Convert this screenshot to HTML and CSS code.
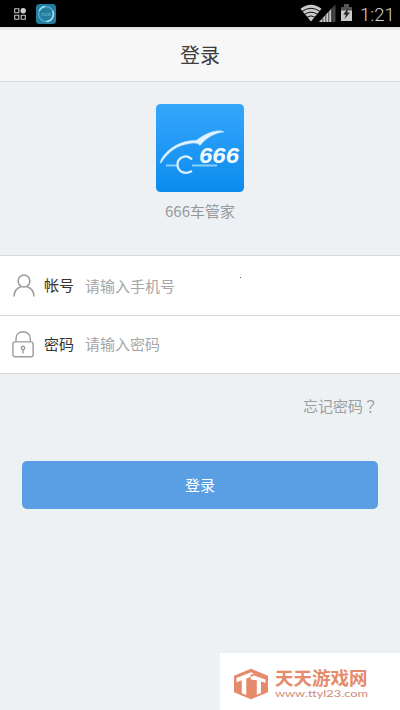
FILE: index.html
```html
<!DOCTYPE html>
<html lang="zh-CN">
<head>
<meta charset="utf-8">
<title>登录</title>
<link rel="stylesheet" href="styles.css">
</head>
<body>
<div class="screen">
  <div class="status">
    <svg class="status-apps" viewBox="0 0 12 12" width="12" height="12">
      <g fill="none" stroke="#c4c4c4" stroke-width="1.1"><path d="M.7.7h4.1v4.1H.7zM.7 7.2h4.1v4.1H.7zM7.2 7.2h4.1v4.1H7.2z"/></g>
      <circle cx="9.2" cy="2.8" r="2.7" fill="#d0d0d0"/>
    </svg>
    <svg class="status-nox" viewBox="0 0 20 20" width="20" height="20">
      <rect width="20" height="20" rx="3.5" fill="#247da0"/>
      <circle cx="10" cy="10" r="7.4" fill="none" stroke="#4aaac8" stroke-width="1.5"/>
      <path d="M3.3 6.8A7.5 7.5 0 0 1 9 2.6M16.7 6.8A7.5 7.5 0 0 1 10.5 17.5" fill="none" stroke="#a9dcea" stroke-width="1.5"/>
      <text class="nox-text" x="10" y="12" text-anchor="middle">nox</text>
    </svg>
    <span class="spacer"></span>
    <svg class="status-signals" viewBox="0 0 54 20" width="54" height="20">
      <path d="M.5 4.800Q11 -3.200 21.500 4.800L11 17.500z" fill="#c9c9c9"/>
      <path d="M2 7.400Q11 1.200 20 7.400M4.500 10.300Q11 6 17.500 10.300M7 13.200Q11 10.600 15 13.200" fill="none" stroke="#111" stroke-width="1"/>
      <path d="M31.500 4.500L35.500 .5V18h-4z" fill="#444"/>
      <path d="M19 18L31.500 4.500V18z" fill="#c9c9c9"/>
      <path d="M22.800 13v5M25.800 10v8M28.800 7v11M31.800 5v13" stroke="#222" stroke-width=".8"/>
      <path d="M41 3h3V0h5v3h3v4H41z" fill="#555"/>
      <path d="M41 6.500h11V17H41z" fill="#c9c9c9"/>
      <path d="M48.200 4L43.300 10.500H46L44.500 15L50 8.500H47.200z" fill="#222"/>
    </svg>
    <span class="clock">1:21</span>
  </div>
  <header class="header">登录</header>
  <section class="brand">
    <svg class="logo" viewBox="0 0 88 88" width="88" height="88">
      <defs><linearGradient id="sky" x2="0" y2="1"><stop offset="0" stop-color="#35a6fb"/><stop offset="1" stop-color="#0b8bee"/></linearGradient></defs>
      <rect width="88" height="88" rx="4.500" fill="url(#sky)"/>
      <path d="M4 58.500C8 47 23 36 40 36.500C50 29 62 24.500 68 28C59 28.500 50 34 44 41.500C42 39.300 39 38.700 35 39.300C21 41 12 48 5 59z" fill="#e2f3ff" stroke="#bfe3fd" stroke-width=".5"/>
      <path d="M10 61.500H21M36 61.500H61" stroke="#8bcffb" stroke-width="2" fill="none"/>
      <path d="M36 55.500C30 49 21 54 21.500 61C22 68 29 71 36 67" stroke="#d9f0ff" stroke-width="2.300" fill="none"/>
      <text class="logo-text" x="43" y="58.500" textLength="40" lengthAdjust="spacingAndGlyphs">666</text>
    </svg>
    <div class="brand-name">666车管家</div>
  </section>
  <form class="form">
    <label class="row account">
      <svg class="icon" viewBox="0 0 22 28" width="22" height="28"><g fill="none" stroke="#9b9b9b" stroke-width="1.500"><circle cx="11" cy="8.500" r="5.900"/><path d="M1 24C1.200 18.500 4.300 15.300 8 14.200M14 14.200C17.700 15.300 20.800 18.500 21 24"/></g></svg>
      <span class="label">帐号</span><span class="hint">请输入手机号</span><span class="dot"></span>
    </label>
    <label class="row password">
      <svg class="icon" viewBox="0 0 22 28" width="22" height="28"><g fill="none" stroke="#9b9b9b" stroke-width="1.400"><rect x=".9" y="11.900" width="20.200" height="14.800" rx="2"/><path d="M4 11.500V8.500C4 4.300 7 1.700 11 1.700S18.300 4.300 18.300 8.500V11.500"/><circle cx="11" cy="18" r="1.700"/><path d="M11 19.700V23.500"/></g></svg>
      <span class="label">密码</span><span class="hint">请输入密码</span>
    </label>
  </form>
  <div class="forgot">忘记密码<span class="mark" lang="zh-TW">？</span></div>
  <button class="submit" type="button">登录</button>
  <div class="watermark">
    <svg viewBox="0 0 36 32" width="36" height="32">
      <path d="M18 .7L35 7.700V24.300L18 31.300L1 24.300V7.700z" fill="#e58b6c"/>
      <path d="M3.500 10L18 4.300L21 5.500L17.300 7V9L13.300 10.500V27L8.800 25.200V12.200L3.500 14.200z" fill="#fff"/>
      <path d="M17.800 8.800L21 7.500L32.500 11.500V14.800L28 13.500V25L23.800 26.800V12.300L17.800 11.500z" fill="#fff"/>
    </svg>
    <div class="site"><div class="site-name">天天游戏网</div>
    <svg class="site-url" width="94" height="14" viewBox="0 0 94 14"><text x="0" y="10" textLength="93" lengthAdjust="spacingAndGlyphs">www.ttyl23.com</text></svg></div>
  </div>
</div>
</body>
</html>
```
FILE: styles.css
```css
* { box-sizing: border-box; }
body { margin: 0; font-family: "Noto Sans", "Noto Sans CJK SC", sans-serif; }
svg { display: block; flex: none; }
.screen { position: relative; display: flex; flex-direction: column; width: 400px; height: 710px; overflow: hidden; background: #edf1f4; }
.status { display: flex; flex: none; height: 27px; padding: 4px 7px 0 14px; background: #000; }
.status-apps { margin-top: 4px; }
.status-nox { margin-left: 10px; }
.nox-text { font: 6px Roboto, sans-serif; fill: #67b7ce; }
.spacer { flex: 1; }
.status-signals { margin-right: 6px; }
.clock { width: 33px; font: 300 18.5px/22px Roboto, sans-serif; color: #d4d4d4; white-space: nowrap; }
.header { flex: none; height: 55px; border-bottom: 1px solid #d8dcdf; background: linear-gradient(#ddd 0, #f7f7f7 4px); color: #3c3c3c; font-size: 20px; font-weight: 400; line-height: 58px; text-align: center; }
.brand { display: flex; flex: none; flex-direction: column; align-items: center; height: 173px; padding-top: 22px; }
.logo-text { font: italic bold 22px "Liberation Sans", sans-serif; fill: #f4fbff; }
.brand-name { margin-top: 8px; color: #94989a; font-family: "Noto Sans CJK SC", sans-serif; font-size: 15px; font-weight: 400; line-height: 22px; }
.form { flex: none; margin: 0; border-top: 1px solid #d5d9dc; background: #fff; }
.row { display: flex; align-items: center; padding-left: 13px; border-bottom: 1px solid #d5d9dc; font-size: 15px; line-height: 22px; }
.account { height: 60px; }
.password { height: 58px; }
.account .icon { transform: translateY(0.5px); }
.password .icon { margin-left: -1px; margin-right: 1px; transform: translateY(-1px); }
.label { width: 41px; margin: -2px 0 0 9px; color: #333; }
.hint { color: #a6a6a6; margin-top: -2px; }
.account .hint { padding-top: 2px; }
.dot { width: 1px; height: 1px; margin: -16px 0 0 65px; background: #944; }
.forgot { flex: none; height: 22px; margin-top: 21px; padding-right: 22px; color: #9b9fa1; font-size: 15px; line-height: 22px; text-align: right; }
.mark { font-family: "Noto Sans CJK TC", sans-serif; }
.submit { flex: none; height: 48px; margin: 44px 22px 0; padding: 0 0 1px; border: 0; border-radius: 5px; background: #5a9fe3; color: #fff; font: 15px/47px "Noto Sans CJK SC", sans-serif; }
.watermark { position: absolute; right: 0; bottom: 0; display: flex; width: 180px; height: 57px; padding: 15px 0 0 13px; background: #fff; }
.site { display: flex; flex-direction: column; margin-left: 6px; }
.site-name { color: #e58b6c; font-family: "Noto Sans CJK SC", sans-serif; font-size: 18.5px; font-weight: 700; line-height: 19px; white-space: nowrap; }
.site-url { font: 10px Lato, sans-serif; fill: #d08b78; }
```
